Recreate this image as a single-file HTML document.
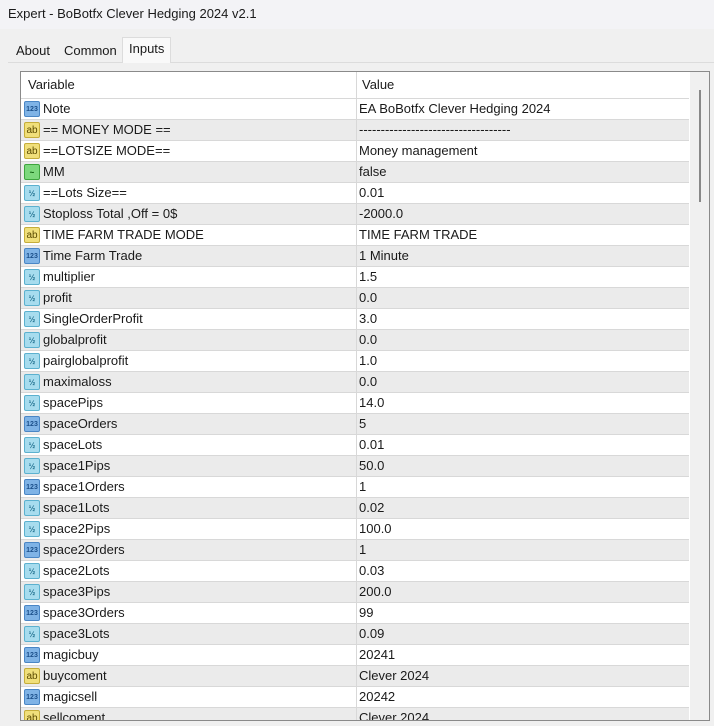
<!DOCTYPE html>
<html><head><meta charset="utf-8"><style>
*{margin:0;padding:0;box-sizing:border-box}
body{width:714px;height:726px;overflow:hidden;background:#f0f0f0;font-family:"Liberation Sans","Noto Sans CJK SC",sans-serif;font-size:13px;color:#1a1a1a;position:relative}
.title{position:absolute;left:0;top:0;width:714px;height:29px;background:#f3f3f6;padding:6px 0 0 8px;font-size:13px}
.tab{position:absolute;top:41px;height:22px;font-size:13px;padding-top:2px}
.tabs-line{position:absolute;left:8px;right:0;top:62px;border-top:1px solid #dcdcdc}
.sel{top:37px;height:26px;background:#f9f9f9;border:1px solid #dcdcdc;border-bottom:none;padding:3px 6px 0}
.box{position:absolute;left:20px;top:71px;width:690px;height:650px;border:1px solid #8a8a8a;background:#fff;overflow:hidden}
.hdr{position:absolute;left:0;top:0;width:668px;height:26px;background:#fff}
.hdr span{position:absolute;top:5px}
.row{position:absolute;left:0;width:668px;height:21px;border-top:1px solid #d8d8d8}
.row.g{background:#ebebeb}
.row .n{position:absolute;left:22px;top:2px}
.row .v{position:absolute;left:338px;top:2px}
.col{position:absolute;left:335px;top:0;height:650px;border-left:1px solid #d8d8d8}
.ic{position:absolute;left:3px;top:2px;width:16px;height:16px;border-radius:2px;font-size:8px;font-weight:bold;text-align:center;line-height:15px}
.i1{background:#7fb3e6;border:1px solid #4a86c5;color:#1b4f8a;font-size:7px}
.ia{background:#f0df7a;border:1px solid #c5ad3a;color:#5a4a00;font-size:10px;font-weight:normal}
.ih{background:#a7dcee;border:1px solid #5cb1cf;color:#1f6f8e;font-size:8px}
.im{background:#7dd87d;border:1px solid #3ea53e;color:#0a5a0a}
.sb{position:absolute;left:669px;top:0;width:20px;height:650px;background:#f0f0f0}
.th{position:absolute;left:678px;top:18px;width:2px;height:112px;background:#888}
</style></head><body>
<div class="title">Expert - BoBotfx Clever Hedging 2024 v2.1</div>
<div class="tabs-line"></div>
<div class="tab" style="left:16px">About</div>
<div class="tab" style="left:64px">Common</div>
<div class="tab sel" style="left:122px">Inputs</div>
<div class="box">
<div class="hdr"><span style="left:7px">Variable</span><span style="left:341px">Value</span></div>
<div id="rows"></div>
<div class="col"></div>
<div class="sb"></div><div class="th"></div>
</div>
<script>
var d=[["1","Note","EA BoBotfx Clever Hedging 2024"],["a","== MONEY MODE ==","-----------------------------------"],["a","==LOTSIZE MODE==","Money management"],["m","MM","false"],["h","==Lots Size==","0.01"],["h","Stoploss Total ,Off = 0$","-2000.0"],["a","TIME FARM TRADE MODE"," TIME FARM TRADE"],["1","Time Farm Trade","1 Minute"],["h","multiplier","1.5"],["h","profit","0.0"],["h","SingleOrderProfit","3.0"],["h","globalprofit","0.0"],["h","pairglobalprofit","1.0"],["h","maximaloss","0.0"],["h","spacePips","14.0"],["1","spaceOrders","5"],["h","spaceLots","0.01"],["h","space1Pips","50.0"],["1","space1Orders","1"],["h","space1Lots","0.02"],["h","space2Pips","100.0"],["1","space2Orders","1"],["h","space2Lots","0.03"],["h","space3Pips","200.0"],["1","space3Orders","99"],["h","space3Lots","0.09"],["1","magicbuy","20241"],["a","buycoment","Clever 2024"],["1","magicsell","20242"],["a","sellcoment","Clever 2024"]];
var t={"1":["i1","123"],"a":["ia","ab"],"h":["ih","½"],"m":["im","~"]};
var h="";d.forEach(function(r,i){h+='<div class="row'+(i%2?' g':'')+'" style="top:'+(26+i*21)+'px"><div class="ic '+t[r[0]][0]+'">'+t[r[0]][1]+'</div><span class="n">'+r[1]+'</span><span class="v">'+r[2]+'</span></div>'});
document.getElementById("rows").innerHTML=h;
</script>
</body></html>
